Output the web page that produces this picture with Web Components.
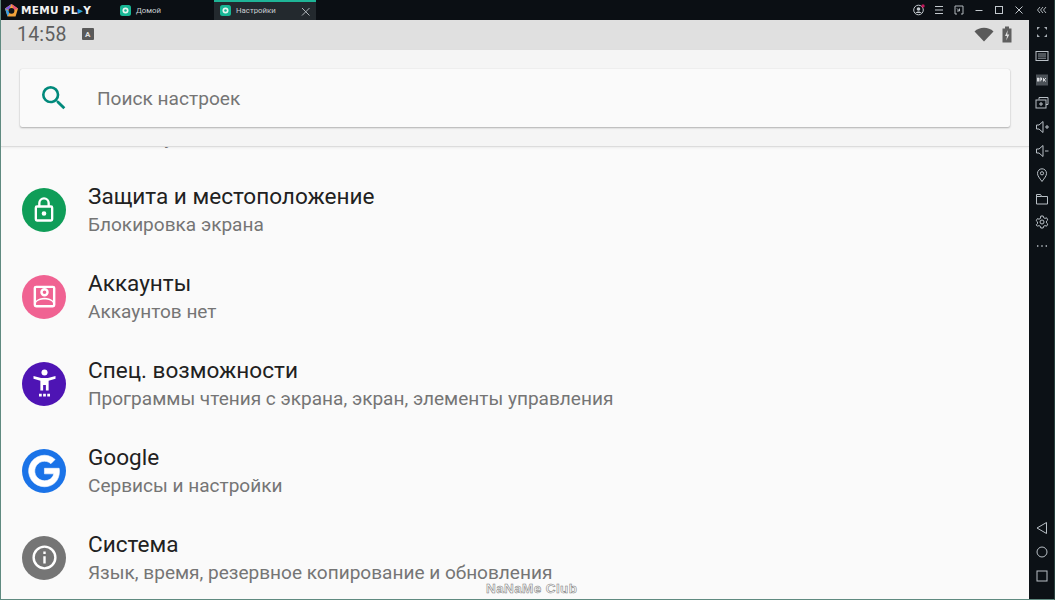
<!DOCTYPE html>
<html>
<head>
<meta charset="utf-8">
<style>
  html, body { margin: 0; height: 100%; overflow: hidden; background: #0c1116; }
  body { font-family: Roboto, "Liberation Sans", sans-serif; }
</style>
</head>
<body>
<memu-window>
  <memu-titlebar slot="top"></memu-titlebar>
  <android-screen>
    <settings-row slot="rows" icon="none" title="Хранилище" sub="Используется 27 %, свободно 7 ГБ"></settings-row>
    <settings-row slot="rows" icon="lock" color="#0f9d58" title="Защита и местоположение" sub="Блокировка экрана"></settings-row>
    <settings-row slot="rows" icon="account" color="#f06292" title="Аккаунты" sub="Аккаунтов нет"></settings-row>
    <settings-row slot="rows" icon="access" color="#4e14b4" title="Спец. возможности" sub="Программы чтения с экрана, экран, элементы управления"></settings-row>
    <settings-row slot="rows" icon="google" color="#1a73e8" title="Google" sub="Сервисы и настройки"></settings-row>
    <settings-row slot="rows" icon="info" color="#757575" title="Система" sub="Язык, время, резервное копирование и обновления"></settings-row>
  </android-screen>
  <memu-sidebar slot="side"></memu-sidebar>
</memu-window>

<script>
// outline icons on the dark chrome
const chromeIcons = {
  expand: '<path d="M2 2h3L2 5zM12 2H9l3 3zM2 12h3L2 9zM12 12H9l3-3z" fill="#a9b0b6" stroke="none"/>',
  keyboard: '<rect x="1" y="2.500" width="12" height="9"/><path d="M3 5h8M3 7h8M3 9.200h8" stroke-width=".8"/>',
  apk: '<rect x="1" y="1.500" width="12" height="11" fill="#4c5258" stroke="none"/><path d="M2.500 8.500V5l1 0v3.500M5 8.500V5h1.500v2H5M8.500 5v3.500M11 5L9 7l2 1.500" stroke-width=".9" stroke="#e4e7ea"/>',
  multi: '<path d="M4 3.500V1.500h9v7h-2"/><rect x="1" y="4" width="10" height="8"/><path d="M6 6v4M4 8h4"/>',
  volup: '<path d="M1.500 5H4l4-3.500v11L4 9H1.500z"/><path d="M10 7h4M12 5v4"/>',
  voldown: '<path d="M1.500 5H4l4-3.500v11L4 9H1.500z"/><path d="M10 7h3.500"/>',
  pin: '<path d="M7 13.500C4.500 10 2.500 8 2.500 5.300a4.500 4.500 0 0 1 9 0C11.500 8 9.500 10 7 13.500z"/><circle cx="7" cy="5.300" r="1.600"/>',
  folder: '<path d="M1.500 12V2.500h4l1.200 2h5.800V12zM1.500 4.500h5.200"/>',
  gear: '<circle cx="7" cy="7" r="2"/><path d="M5.800 1h2.400l.4 1.700 1.400.7 1.600-.6 1.200 2.100-1.300 1.200v1.800l1.300 1.200-1.200 2.100-1.600-.6-1.400.7-.4 1.700H5.800l-.4-1.700-1.400-.7-1.600.6L1.200 9.900l1.300-1.200V6.900L1.200 5.700 2.400 3.600l1.600.6 1.400-.7z"/>',
  dots: '<path d="M2 7h1.400M6.300 7h1.400M10.600 7H12" stroke-width="1.300"/>',
  back: '<path d="M11.500 1.500v11L2 7z"/>',
  home: '<circle cx="7" cy="7" r="5"/>',
  recent: '<rect x="2" y="2" width="10" height="10"/>'
};

class MemuWindow extends HTMLElement {
  connectedCallback() {
    const shadow = this.attachShadow({ mode: "open" });
    shadow.innerHTML = `
      <style>
        :host {
          display: grid;
          grid-template-columns: 1fr 25px;
          grid-template-rows: 20px 1fr;
          height: 600px;
          box-sizing: border-box;
          border-left: 1px solid #5f8a80;
          border-bottom: 1px solid #5f8a80;
          border-right: 1px solid #27403d;
          background: #0c1116;
          position: relative;
        }
        .top { grid-column: 1 / 3; }
        .mark {
          position: absolute;
          z-index: 5;
          left: 485px;
          bottom: 5px;
          font: 700 13.500px/10px "Liberation Sans", sans-serif;
          letter-spacing: .4px;
          color: #f6f6f6;
          -webkit-text-stroke: .5px #777;
        }
      </style>
      <div class="top"><slot name="top"></slot></div>
      <slot></slot>
      <slot name="side"></slot>
      <div class="mark">NaNaMe Club</div>
    `;
  }
}

class MemuTitlebar extends HTMLElement {
  connectedCallback() {
    const shadow = this.attachShadow({ mode: "open" });
    const ctrl = (d, w) => `<svg width="${w || 12}" height="12" viewBox="0 0 12 12" fill="none" stroke="#c2c8cd" stroke-width="1">${d}</svg>`;
    const tabGear = `<svg width="11" height="11" viewBox="0 0 11 11"><rect width="11" height="11" rx="2.500" fill="#17b795"/><circle cx="5.500" cy="5.500" r="3" fill="#e6f5f1"/><circle cx="5.500" cy="5.500" r="1.300" fill="#17b795"/></svg>`;
    shadow.innerHTML = `
      <style>
        :host { display: flex; align-items: stretch; height: 20px; background: #0b0f14; color: #c9ced2; font-size: 7.800px; }
        .logo { width: 113px; display: flex; align-items: center; gap: 2px; padding-left: 3px; box-sizing: border-box; }
        .word { font: 700 10.500px "DejaVu Sans", sans-serif; letter-spacing: .3px; color: #f2f2f2; white-space: nowrap; }
        .word b { color: #2a9fe0; font-weight: 700; }
        .tab { display: flex; align-items: center; gap: 5px; box-sizing: border-box; padding-left: 6px; }
        .home { width: 100px; }
        .cur { width: 102px; background: #23292e; border-top: 2px solid #1fb597; position: relative; padding-bottom: 2px; }
        .cur .x { position: absolute; right: 2px; top: 2px; }
        .gap { flex: 1; }
        .ctrls { display: flex; align-items: center; gap: 8px; padding-right: 6px; }
        .ctrls svg { display: block; }
        .ctrls svg:last-child { margin-left: 2px; }
      </style>
      <div class="logo">
        <svg width="15" height="15" viewBox="0 0 15 15">
          <path d="M7.500 1L14 5.500 11.500 13.500H3.500L1 5.500z" fill="#f2a33a"/>
          <path d="M7.500 1L14 5.500 10 7z" fill="#e84f7a"/>
          <path d="M1 5.500L7.500 1 5 7z" fill="#7a5ae0"/>
          <path d="M3.500 13.500L1 5.500 6 9z" fill="#3aa0e8"/>
          <circle cx="7.500" cy="7.800" r="2.900" fill="#10141a"/>
        </svg>
        <span class="word">MEMU PL<b>▸</b>Y</span>
      </div>
      <div class="tab home">${tabGear}<span>Домой</span></div>
      <div class="tab cur">${tabGear}<span>Настройки</span>
        <svg class="x" width="16" height="16" viewBox="0 0 16 16" fill="none" stroke="#aeb4b9"><path d="M4 4l7.500 7.500M11.500 4L4 11.500"/></svg>
      </div>
      <div class="gap"></div>
      <div class="ctrls">
        <svg width="12" height="12" viewBox="0 0 12 12"><circle cx="5.500" cy="6" r="4.800" fill="none" stroke="#c2c8cd"/><circle cx="5.500" cy="5" r="1.800" fill="#c2c8cd"/><path d="M2.500 9c1-2 5-2 6 0" fill="#c2c8cd"/><circle cx="10" cy="2" r="1.700" fill="#c2185b"/></svg>
        ${ctrl('<path d="M2 2.500h8M2 6h8M2 9.500h8"/>')}
        ${ctrl('<path d="M8 10h2V2H2v8h2M4 4.500l2.500 2.500M4 7h2.500M6.500 4.500V7" stroke-width=".9"/>')}
        ${ctrl('<path d="M2.500 6.500h7"/>')}
        ${ctrl('<rect x="2.500" y="2.500" width="7" height="7"/>')}
        ${ctrl('<path d="M2.500 2.500l7 7M9.500 2.500l-7 7"/>')}
        ${ctrl('<path d="M4.500 3L2 6l2.500 3M7.500 3L5 6l2.500 3M10.500 3L8 6l2.500 3" stroke-width=".9"/>', 13)}
      </div>
    `;
  }
}

class MemuSidebar extends HTMLElement {
  connectedCallback() {
    const shadow = this.attachShadow({ mode: "open" });
    const btn = name => `<svg viewBox="0 0 14 14" width="14" height="14" fill="none" stroke="#b9c0c6" stroke-width="1">${chromeIcons[name]}</svg>`;
    const top = ["expand", "keyboard", "apk", "multi", "volup", "voldown", "pin", "folder", "gear", "dots"];
    const bottom = ["back", "home", "recent"];
    shadow.innerHTML = `
      <style>
        :host { display: flex; flex-direction: column; justify-content: space-between; align-items: center; background: #0c1116; padding: 5px 0 16px; box-sizing: border-box; }
        .group { display: flex; flex-direction: column; gap: 9.800px; }
        svg { display: block; }
      </style>
      <div class="group">${top.map(btn).join("")}</div>
      <div class="group">${bottom.map(btn).join("")}</div>
    `;
  }
}

class AndroidScreen extends HTMLElement {
  connectedCallback() {
    const shadow = this.attachShadow({ mode: "open" });
    shadow.innerHTML = `
      <style>
        :host { display: flex; flex-direction: column; position: relative; overflow: hidden; background: #fafafa; height: 579px; }
        .status { height: 30px; flex: none; background: #e0e0e0; display: flex; align-items: center; color: #5f5f5f; padding: 0 16px; position: relative; z-index: 2; gap: 15px; }
        .time { font-size: 19.500px; letter-spacing: .2px; margin-bottom: 1px; }
        .a { width: 12px; height: 12px; background: #5a5a5a; color: #e0e0e0; font: 700 8px Roboto, sans-serif; display: flex; align-items: center; justify-content: center; border-radius: 1px; margin-bottom: 2px; }
        .gap { flex: 1; }
        .tray { display: flex; align-items: center; gap: 8px; margin-right: 1px; margin-bottom: 2px; }
        svg { display: block; }
        .head { height: 97px; flex: none; box-sizing: border-box; background: #f5f5f5; padding: 19px 19px 20px 19px; border-bottom: 1px solid #dcdcdc; box-shadow: 0 1px 2px rgba(0,0,0,.06); position: relative; z-index: 2; }
        .search { height: 58px; background: #fafafa; border-radius: 2px; box-shadow: 0 1px 2px rgba(0,0,0,.28), 0 0 1px rgba(0,0,0,.16); display: flex; align-items: center; padding-left: 18px; }
        .hint { font-size: 19.100px; color: #757575; margin-left: 27px; }
        .list { margin-top: -68px; position: relative; z-index: 1; }
      </style>
      <div class="status">
        <span class="time">14:58</span>
        <span class="a">A</span>
        <span class="gap"></span>
        <span class="tray">
          <svg width="20" height="15" viewBox="0 0 20 15"><path d="M0.500 4.500C5.500 -.5 14.500 -.5 19.500 4.500L10 14.500z" fill="#5a5a5a"/></svg>
          <svg width="10" height="17" viewBox="0 0 10 17"><path d="M.5 2.500h2.500V.5h4v2h2.500v14H.5z" fill="#5f5f5f"/><path d="M5.800 4L3 10h2l-.8 4.500L7.300 8.500H5.200z" fill="#e0e0e0"/></svg>
        </span>
      </div>
      <div class="head">
        <div class="search">
          <svg width="32" height="32" viewBox="0 0 24 24"><path d="M15.500 14h-.79l-.28-.27A6.470 6.470 0 0 0 16 9.500 6.500 6.500 0 1 0 9.500 16c1.610 0 3.090-.59 4.230-1.570l.27.28v.79l5 4.990L20.490 19l-4.990-5zm-6 0C7.010 14 5 11.990 5 9.500S7.010 5 9.500 5 14 7.010 14 9.500 11.990 14 9.500 14z" fill="#00897b"/></svg>
          <span class="hint">Поиск настроек</span>
        </div>
      </div>
      <div class="list"><slot name="rows"></slot></div>
    `;
  }
}

class SettingsRow extends HTMLElement {
  connectedCallback() {
    const shadow = this.attachShadow({ mode: "open" });
    const glyphs = {
      none: "",
      lock: '<path d="M18 8h-1V6a5 5 0 0 0-10 0v2H6a2 2 0 0 0-2 2v10a2 2 0 0 0 2 2h12a2 2 0 0 0 2-2V10a2 2 0 0 0-2-2zM9 6a3 3 0 0 1 6 0v2H9zm9 14H6V10h12zm-6-3a2 2 0 1 0 0-4 2 2 0 0 0 0 4z" fill="#fff"/>',
      account: '<path d="M19 3H5a2 2 0 0 0-2 2v14a2 2 0 0 0 2 2h14a2 2 0 0 0 2-2V5a2 2 0 0 0-2-2zm0 16H5v-1.500c0-1.700 4-3 7-3s7 1.300 7 3zm0-3.500c-1.500-1.600-4.700-2.500-7-2.500s-5.500.9-7 2.500V5h14zM12 12a3.500 3.500 0 1 0 0-7 3.500 3.500 0 0 0 0 7zm0-5a1.500 1.500 0 1 1 0 3 1.500 1.500 0 0 1 0-3z" fill="#fff"/>',
      access: '<circle cx="12" cy="4" r="2.200" fill="#fff"/><path d="M4 6.500L9.500 8h5L20 6.500v2L15 10v7h-2v-4h-2v4H9v-7L4 8.500zM8 19.500h2v2H8zM11 19.500h2v2h-2zM14 19.500h2v2h-2z" fill="#fff"/>',
      google: '<path d="M12.300 10.200v3.700h6.200c-.6 2.800-3 4.600-6.200 4.600a6.500 6.500 0 1 1 4.300-11.400l2.800-2.800A10.500 10.500 0 1 0 12.300 22.500c5.700 0 10-4.100 10-10.300 0-.7-.1-1.400-.2-2z" fill="#fff" stroke="#fff" stroke-width=".4"/>',
      info: '<path d="M12 2a10 10 0 1 0 0 20 10 10 0 0 0 0-20zm0 18a8 8 0 1 1 0-16 8 8 0 0 1 0 16zM11 11h2v6h-2zm0-4h2v2h-2z" fill="#fff"/>'
    };
    const sizes = { lock: 28, account: 29, access: 33, google: 36, info: 29, none: 24 };
    const name = this.getAttribute("icon");
    const size = sizes[name];
    shadow.innerHTML = `
      <style>
        :host { display: flex; align-items: center; height: 87px; box-sizing: border-box; padding-left: 21px; background: #fafafa; }
        .icon { width: 44px; height: 44px; flex: none; border-radius: 50%; display: flex; align-items: center; justify-content: center; }
        .text { margin-left: 22px; padding-top: 2px; }
        .title { font-size: 22.550px; line-height: 28px; color: #212121; }
        .sub { font-size: 19.050px; line-height: 27px; color: #757575; white-space: nowrap; }
        svg { display: block; }
      </style>
      <div class="icon" style="background:${name === "none" ? "transparent" : this.getAttribute("color")}">
        <svg width="${size}" height="${size}" viewBox="0 0 24 24">${glyphs[name]}</svg>
      </div>
      <div class="text">
        <div class="title">${this.getAttribute("title")}</div>
        <div class="sub">${this.getAttribute("sub")}</div>
      </div>
    `;
  }
}

customElements.define("memu-window", MemuWindow);
customElements.define("memu-titlebar", MemuTitlebar);
customElements.define("memu-sidebar", MemuSidebar);
customElements.define("android-screen", AndroidScreen);
customElements.define("settings-row", SettingsRow);
</script>
</body>
</html>
